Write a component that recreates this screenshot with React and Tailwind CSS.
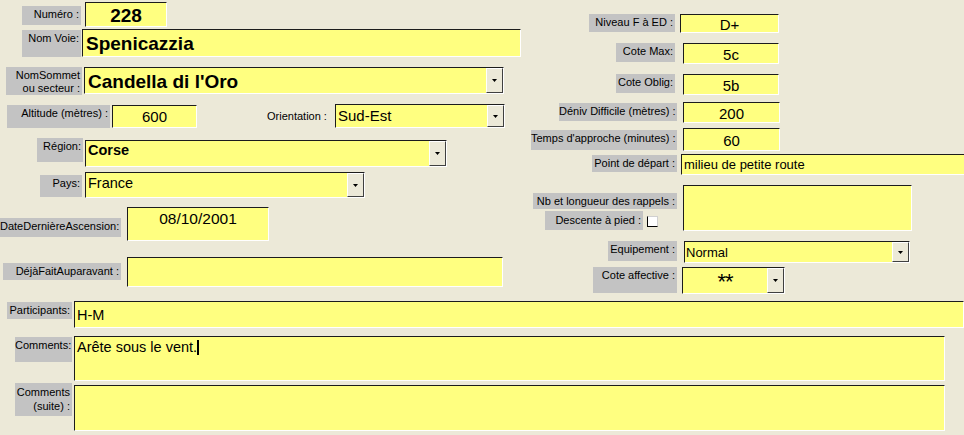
import React from "react";

function Label({ className = "", children }) {
  return (
    <div
      className={`shrink-0 bg-[#c3c3c3] text-[11px] leading-[13px] text-right text-black pt-[2px] pr-[2px] whitespace-nowrap ${className}`}
    >
      {children}
    </div>
  );
}

function Field({ className = "", children, combo = false, textClass = "" }) {
  return (
    <div
      className={`shrink-0 flex bg-[#ffff80] border-t border-l border-t-[#1c1c1c] border-l-[#1c1c1c] border-b border-r border-b-white border-r-white overflow-hidden ${className}`}
    >
      <div className={`flex-1 min-w-0 whitespace-nowrap text-black ${textClass}`}>
        {children}
      </div>
      {combo && (
        <div className="w-[17px] shrink-0 flex items-center justify-center bg-[#ece9d8] border-t border-l border-t-white border-l-white border-b border-r border-b-[#404040] border-r-[#404040]">
          <svg width="5" height="3" viewBox="0 0 5 3">
            <path d="M0 0h5L2.5 3z" fill="#000" />
          </svg>
        </div>
      )}
    </div>
  );
}

export default function App() {
  return (
    <div className="w-[964px] h-[435px] overflow-hidden bg-[#ece9d8] font-['Liberation_Sans',Arial,sans-serif] flex flex-col">
      {/* upper part: two columns of controls */}
      <div className="flex h-[298px]">
        <div className="w-[525px] shrink-0 flex flex-col">
          <div className="flex items-start mt-[2px]">
            <Label className="ml-[22px] mt-[4px] w-[59px] h-[19px]">Numéro :</Label>
            <Field
              className="ml-[4px] w-[82px] h-[25px]"
              textClass="text-center text-[19px] font-bold leading-[22px] pt-[2px]"
            >
              228
            </Field>
          </div>

          <div className="flex items-start mt-[2px]">
            <Label className="ml-[22px] mt-[1px] w-[59px] h-[27px]">Nom Voie:</Label>
            <Field
              className="ml-[1px] w-[439px] h-[28px]"
              textClass="text-[19px] font-bold leading-[22px] pl-[3px] pt-[3px]"
            >
              Spenicazzia
            </Field>
          </div>

          <div className="flex items-start mt-[10px]">
            <Label className="ml-[6px] w-[76px] h-[28px] leading-[12px]">
              NomSommet
              <br />
              ou secteur :
            </Label>
            <Field
              combo
              className="ml-[2px] w-[420px] h-[27px]"
              textClass="text-[19px] font-bold leading-[22px] pl-[3px] pt-[3px]"
            >
              Candella di l'Oro
            </Field>
          </div>

          <div className="flex items-start mt-[9px]">
            <Label className="ml-[7px] mt-[1px] w-[103px] h-[23px]">Altitude (mètres) :</Label>
            <Field
              className="ml-[2px] mt-[1px] w-[85px] h-[23px]"
              textClass="text-center text-[15px] leading-[17px] pt-[2px]"
            >
              600
            </Field>
            <div className="ml-[70px] mt-[6px] w-[62px] shrink-0 text-[11px] leading-[13px] text-black whitespace-nowrap">
              Orientation :
            </div>
            <Field
              combo
              className="ml-[6px] w-[170px] h-[24px]"
              textClass="text-[15px] leading-[17px] pl-[2px] pt-[2px]"
            >
              Sud-Est
            </Field>
          </div>

          <div className="flex items-start mt-[10px]">
            <Label className="ml-[37px] w-[46px] h-[24px]">Région:</Label>
            <Field
              combo
              className="ml-[2px] mt-[2px] w-[362px] h-[27px]"
              textClass="text-[14.5px] font-bold leading-[17px] pl-[2px] pt-[1px]"
            >
              Corse
            </Field>
          </div>

          <div className="flex items-start mt-[5px]">
            <Label className="ml-[40px] mt-[3px] w-[42px] h-[22px]">Pays:</Label>
            <Field
              combo
              className="ml-[3px] w-[280px] h-[26px]"
              textClass="text-[14.5px] leading-[17px] pl-[2px] pt-[2px]"
            >
              France
            </Field>
          </div>

          <div className="flex items-start mt-[9px]">
            <Label className="mt-[11px] w-[121px] h-[19px]">DateDernièreAscension:</Label>
            <Field
              className="ml-[6px] w-[142px] h-[34px]"
              textClass="text-center text-[15.5px] leading-[18px] pt-[2px]"
            >
              08/10/2001
            </Field>
          </div>

          <div className="flex items-start mt-[16px]">
            <Label className="ml-[3px] mt-[6px] w-[118px] h-[17px] pt-[1px]">DéjàFaitAuparavant :</Label>
            <Field className="ml-[6px] w-[376px] h-[30px]" />
          </div>
        </div>

        <div className="flex-1 min-w-0 flex flex-col">
          <div className="flex items-start mt-[14px]">
            <Label className="ml-[64px] w-[86px] h-[18px]">Niveau F à ED :</Label>
            <Field
              className="ml-[5px] w-[99px] h-[19px]"
              textClass="text-center text-[15px] leading-[17px] pt-[1px]"
            >
              D+
            </Field>
          </div>

          <div className="flex items-start mt-[10px]">
            <Label className="ml-[91px] w-[59px] h-[19px]">Cote Max:</Label>
            <Field
              className="ml-[8px] w-[96px] h-[21px]"
              textClass="text-center text-[15px] leading-[17px] pt-[2px]"
            >
              5c
            </Field>
          </div>

          <div className="flex items-start mt-[10px]">
            <Label className="ml-[91px] w-[59px] h-[19px]">Cote Oblig:</Label>
            <Field
              className="ml-[8px] w-[96px] h-[21px]"
              textClass="text-center text-[15px] leading-[17px] pt-[2px]"
            >
              5b
            </Field>
          </div>

          <div className="flex items-start mt-[7px]">
            <Label className="ml-[34px] mt-[1px] w-[118px] h-[18px]">Déniv Difficile (mètres) :</Label>
            <Field
              className="ml-[6px] w-[97px] h-[21px]"
              textClass="text-center text-[15px] leading-[17px] pt-[2px]"
            >
              200
            </Field>
          </div>

          <div className="flex items-start mt-[5px]">
            <Label className="ml-[6px] mt-[2px] w-[146px] h-[20px]">Temps d'approche (minutes) :</Label>
            <Field
              className="ml-[6px] w-[97px] h-[23px]"
              textClass="text-center text-[15px] leading-[17px] pt-[3px]"
            >
              60
            </Field>
          </div>

          <div className="flex items-start mt-[3px]">
            <Label className="ml-[67px] mt-[1px] w-[85px] h-[17px]">Point de départ :</Label>
            <Field
              className="ml-[4px] w-[300px] h-[21px]"
              textClass="text-[13px] leading-[15px] pl-[2px] pt-[2px]"
            >
              milieu de petite route
            </Field>
          </div>

          <div className="flex items-start mt-[10px]">
            <div className="w-[152px] shrink-0 flex flex-col">
              <Label className="ml-[8px] mt-[8px] w-[144px] h-[16px] pt-[1px]">Nb et longueur des rappels :</Label>
              <div className="flex items-start mt-[2px]">
                <Label className="ml-[20px] w-[98px] h-[19px] pt-[3px]">Descente à pied :</Label>
                <div className="ml-[4px] mt-[5px] w-[11px] h-[11px] bg-white border-l border-b border-l-black border-b-black border-t border-r border-t-[#d0d0d0] border-r-[#d0d0d0]" />
              </div>
            </div>
            <Field className="ml-[6px] w-[229px] h-[46px]" />
          </div>

          <div className="flex items-start mt-[10px]">
            <Label className="ml-[83px] w-[69px] h-[20px]">Equipement :</Label>
            <Field
              combo
              className="ml-[7px] w-[226px] h-[22px]"
              textClass="text-[13px] leading-[15px] pl-[1px] pt-[3px]"
            >
              Normal
            </Field>
          </div>

          <div className="flex items-start mt-[4px]">
            <Label className="ml-[68px] w-[84px] h-[26px]">Cote affective :</Label>
            <Field
              combo
              className="ml-[5px] w-[103px] h-[27px]"
              textClass="text-center text-[22px] leading-[22px] pt-[3px] tracking-[-1px]"
            >
              **
            </Field>
          </div>
        </div>
      </div>

      {/* lower part: participants and comments */}
      <div className="flex flex-col">
        <div className="flex items-start mt-[3px]">
          <Label className="ml-[7px] mt-[1px] w-[65px] h-[17px]">Participants:</Label>
          <Field
            className="ml-[2px] flex-1 h-[27px]"
            textClass="text-[14.5px] leading-[17px] pl-[2px] pt-[5px]"
          >
            H-M
          </Field>
        </div>

        <div className="flex items-start mt-[8px]">
          <Label className="ml-[15px] mt-[1px] w-[57px] h-[25px]">Comments:</Label>
          <Field
            className="ml-[2px] w-[871px] h-[45px]"
            textClass="text-[14.5px] leading-[17px] pl-[2px] pt-[2px]"
          >
            Arête sous le vent.
            <span className="inline-block w-[2px] h-[15px] bg-black align-[-3px]" />
          </Field>
        </div>

        <div className="flex items-start mt-[2px]">
          <Label className="ml-[15px] w-[57px] h-[33px] leading-[14px]">
            Comments
            <br />
            (suite) :
          </Label>
          <Field className="ml-[2px] mt-[2px] w-[871px] h-[46px]" />
        </div>
      </div>
    </div>
  );
}
